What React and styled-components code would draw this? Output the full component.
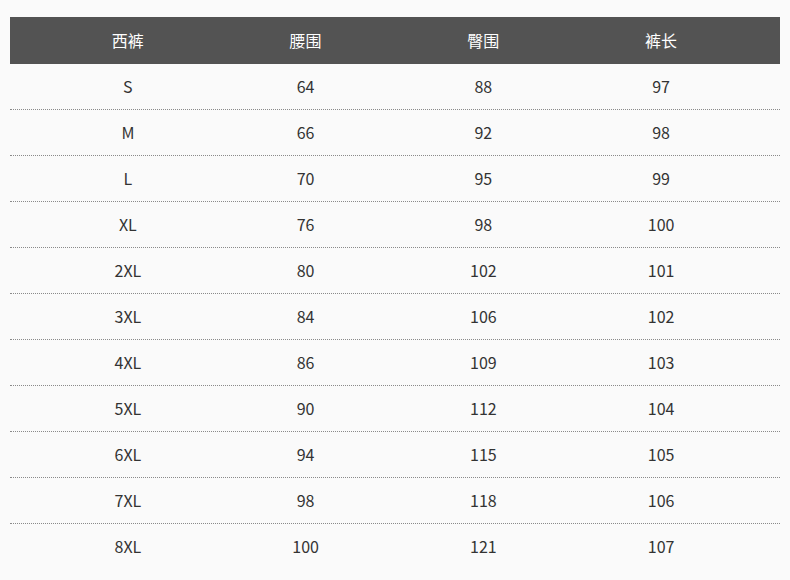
import React from 'react';
import styled, { createGlobalStyle } from 'styled-components';

const GlobalStyle = createGlobalStyle`
  html, body {
    margin: 0;
    padding: 0;
    background: #fafafa;
    font-family: "Noto Sans CJK SC", "Noto Sans", sans-serif;
  }
`;

const Page = styled.div`
  padding: 17px 10px 10px 10px;
`;

const Table = styled.div`
  width: 770px;
`;

const Row = styled.div`
  display: grid;
  grid-template-columns: repeat(4, 1fr);
  padding: 0 30px 2px 29px;
  box-sizing: border-box;
  height: ${(p) => (p.$head ? '47px' : '46px')};
  align-items: center;
  background: ${(p) => (p.$head ? '#535353' : 'transparent')};
  color: ${(p) => (p.$head ? '#ffffff' : '#333333')};
  font-size: 16px;
  border-bottom: ${(p) => (p.$last || p.$head ? 'none' : '1px dotted #8a8a8a')};
`;

const Cell = styled.div`
  text-align: center;
  line-height: 1;
`;

const head = ['西裤', '腰围', '臀围', '裤长'];
const rows = [
  ['S', 64, 88, 97],
  ['M', 66, 92, 98],
  ['L', 70, 95, 99],
  ['XL', 76, 98, 100],
  ['2XL', 80, 102, 101],
  ['3XL', 84, 106, 102],
  ['4XL', 86, 109, 103],
  ['5XL', 90, 112, 104],
  ['6XL', 94, 115, 105],
  ['7XL', 98, 118, 106],
  ['8XL', 100, 121, 107],
];

export default function App() {
  return (
    <>
      <GlobalStyle />
      <Page>
        <Table>
          <Row $head>
            {head.map((h) => (
              <Cell key={h}>{h}</Cell>
            ))}
          </Row>
          {rows.map((r, i) => (
            <Row key={r[0]} $last={i === rows.length - 1}>
              {r.map((c, j) => (
                <Cell key={j}>{c}</Cell>
              ))}
            </Row>
          ))}
        </Table>
      </Page>
    </>
  );
}
